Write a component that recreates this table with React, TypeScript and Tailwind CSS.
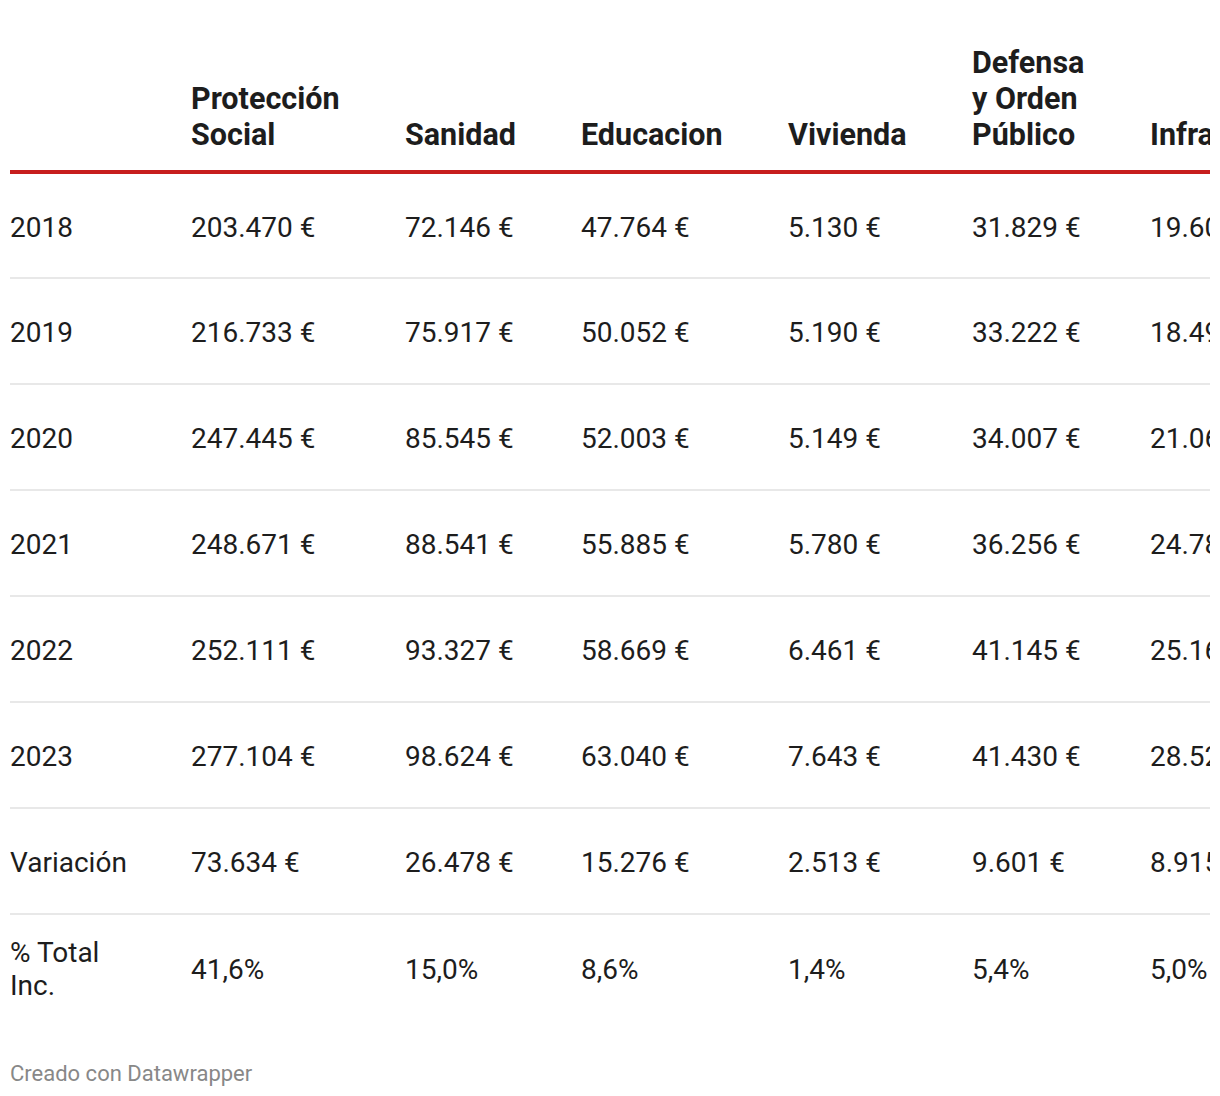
const HEADERS = [
  '',
  'Protección Social',
  'Sanidad',
  'Educacion',
  'Vivienda',
  'Defensa y Orden Público',
  'Infraestructuras',
];

const WIDTHS = ['w-[181px]', 'w-[214px]', 'w-[176px]', 'w-[207px]', 'w-[184px]', 'w-[178px]', 'w-[240px]'];

const ROWS: string[][] = [
  ['2018', '203.470 €', '72.146 €', '47.764 €', '5.130 €', '31.829 €', '19.604 €'],
  ['2019', '216.733 €', '75.917 €', '50.052 €', '5.190 €', '33.222 €', '18.495 €'],
  ['2020', '247.445 €', '85.545 €', '52.003 €', '5.149 €', '34.007 €', '21.062 €'],
  ['2021', '248.671 €', '88.541 €', '55.885 €', '5.780 €', '36.256 €', '24.781 €'],
  ['2022', '252.111 €', '93.327 €', '58.669 €', '6.461 €', '41.145 €', '25.162 €'],
  ['2023', '277.104 €', '98.624 €', '63.040 €', '7.643 €', '41.430 €', '28.520 €'],
  ['Variación', '73.634 €', '26.478 €', '15.276 €', '2.513 €', '9.601 €', '8.915 €'],
  ['% Total Inc.', '41,6%', '15,0%', '8,6%', '1,4%', '5,4%', '5,0%'],
];

const HEADER_WIDTHS = ['max-w-[170px]', 'max-w-[170px]', 'max-w-[170px]', 'max-w-[170px]', 'max-w-[170px]', 'max-w-[130px]', 'max-w-[260px]'];

export default function App() {
  return (
    <div className="bg-white text-[#1d1d1d] font-['Roboto',sans-serif] px-[10px] pt-[45px] min-h-[1096px]">
      <div className="overflow-hidden w-[1200px]">
        <table className="table-fixed border-collapse w-[1380px]">
          <thead>
            <tr className="border-b-4 border-[#c71e1d]">
              {HEADERS.map((h, i) => (
                <th
                  key={i}
                  className={`${WIDTHS[i]} text-left align-bottom font-bold text-[30.5px] leading-[36px] pb-[17px] p-0`}
                >
                  <div className={HEADER_WIDTHS[i]}>{h}</div>
                </th>
              ))}
            </tr>
          </thead>
          <tbody>
            {ROWS.map((row, r) => (
              <tr
                key={r}
                className={r < ROWS.length - 1 ? 'border-b-2 border-[#e8e8e8]' : ''}
              >
                {row.map((cell, c) => (
                  <td
                    key={c}
                    className="h-[106px] align-middle text-[28px] leading-[33px] p-0 pt-[3px] whitespace-nowrap"
                  >
                    {c === 0 && cell === '% Total Inc.' ? (
                      <div className="whitespace-normal max-w-[100px]">% Total Inc.</div>
                    ) : (
                      cell
                    )}
                  </td>
                ))}
              </tr>
            ))}
          </tbody>
        </table>
      </div>
      <div className="mt-[40px] text-[22px] leading-[28px] text-[#888888]">Creado con Datawrapper</div>
    </div>
  );
}
